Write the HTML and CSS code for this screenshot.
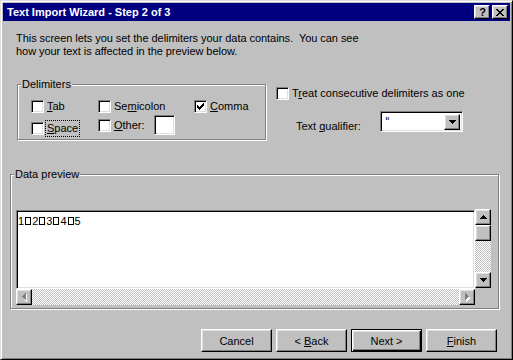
FILE: index.html
```html
<!DOCTYPE html>
<html lang="en">

<head>
    <meta charset="UTF-8">
    <meta name="viewport" content="width=device-width, initial-scale=1.0">
    <title>Text Import Wizard - Step 2 of 3</title>
    <link rel="stylesheet" href="styles.css">
</head>

<body>
    <div class="window">
        <div class="titlebar">
            <span class="title">Text Import Wizard - Step 2 of 3</span>
            <div class="title-buttons">
                <span class="tbtn help">?</span>
                <span class="tbtn">
                    <svg width="8" height="7" viewBox="0 0 8 7" shape-rendering="crispEdges">
                        <path d="M0 0h2v1h-2zM6 0h2v1h-2zM1 1h2v1h-2zM5 1h2v1h-2zM2 2h4v1h-4zM3 3h2v1h-2zM2 4h4v1h-4zM1 5h2v1h-2zM5 5h2v1h-2zM0 6h2v1h-2zM6 6h2v1h-2z" fill="#000" />
                    </svg>
                </span>
            </div>
        </div>

        <div class="content">
            <p class="intro">This screen lets you set the delimiters your data contains.&nbsp; You can see<br>how your text is affected in the preview below.</p>

            <div class="options">
                <div class="group delimiters">
                    <span class="group-label">Delimiters</span>
                    <div class="delim-grid">
                        <label class="check"><span class="box"></span><span><u>T</u>ab</span></label>
                        <label class="check"><span class="box"></span><span>Se<u>m</u>icolon</span></label>
                        <label class="check">
                            <span class="box">
                                <svg width="7" height="7" viewBox="0 0 7 7" shape-rendering="crispEdges">
                                    <path d="M6 0h1v3h-1zM5 1h1v3h-1zM4 2h1v3h-1zM3 3h1v3h-1zM2 4h1v3h-1zM1 3h1v3h-1zM0 2h1v3h-1z" fill="#000" />
                                </svg>
                            </span>
                            <span><u>C</u>omma</span>
                        </label>
                        <label class="check"><span class="box"></span><span class="focus"><u>S</u>pace</span></label>
                        <label class="check other"><span class="box"></span><span><u>O</u>ther:</span><span class="textbox"></span></label>
                    </div>
                </div>

                <div class="side">
                    <label class="check"><span class="box"></span><span>T<u>r</u>eat consecutive delimiters as one</span></label>
                    <div class="qualifier">
                        <span class="qualifier-label">Text <u>q</u>ualifier:</span>
                        <div class="combo">
                            <span class="combo-value">"</span>
                            <span class="sbtn combo-btn">
                                <svg width="7" height="4" viewBox="0 0 7 4" shape-rendering="crispEdges"><path d="M0 0h7v1h-7zM1 1h5v1h-5zM2 2h3v1h-3zM3 3h1v1h-1z" fill="#000" /></svg>
                            </span>
                        </div>
                    </div>
                </div>
            </div>

            <div class="group preview">
                <span class="group-label">Data preview</span>
                <div class="preview-area">
                    <div class="preview-main">
                        <div class="preview-box">
                            <div class="preview-line">1<span class="tab"></span>2<span class="tab"></span>3<span class="tab"></span>4<span class="tab"></span>5</div>
                        </div>
                        <div class="hscroll">
                            <span class="sbtn">
                                <svg width="5" height="9" viewBox="0 0 5 9" shape-rendering="crispEdges"><path d="M4 1h1v8h-1zM3 2h1v6h-1zM2 3h1v4h-1z" fill="#fff" /><path d="M3 0h1v7h-1zM2 1h1v5h-1zM1 2h1v3h-1zM0 3h1v1h-1z" fill="#808080" /></svg>
                            </span>
                            <span class="track"></span>
                            <span class="sbtn">
                                <svg width="5" height="9" viewBox="0 0 5 9" shape-rendering="crispEdges"><path d="M1 1h1v8h-1zM2 2h1v6h-1zM3 3h1v4h-1zM4 4h1v2h-1z" fill="#fff" /><path d="M0 0h1v7h-1zM1 1h1v5h-1zM2 2h1v3h-1zM3 3h1v1h-1z" fill="#808080" /></svg>
                            </span>
                        </div>
                    </div>
                    <div class="vscroll">
                        <span class="sbtn">
                            <svg width="7" height="4" viewBox="0 0 7 4" shape-rendering="crispEdges"><path d="M3 0h1v1h-1zM2 1h3v1h-3zM1 2h5v1h-5zM0 3h7v1h-7z" fill="#000" /></svg>
                        </span>
                        <span class="sbtn thumb"></span>
                        <span class="track"></span>
                        <span class="sbtn">
                            <svg width="7" height="4" viewBox="0 0 7 4" shape-rendering="crispEdges"><path d="M0 0h7v1h-7zM1 1h5v1h-5zM2 2h3v1h-3zM3 3h1v1h-1z" fill="#000" /></svg>
                        </span>
                    </div>
                </div>
            </div>

            <div class="buttons">
                <button class="btn">Cancel</button>
                <button class="btn">&lt; <u>B</u>ack</button>
                <button class="btn default">Next &gt;</button>
                <button class="btn"><u>F</u>inish</button>
            </div>
        </div>
    </div>
</body>

</html>
```

FILE: styles.css
```css
* {
    box-sizing: border-box;
}

body {
    margin: 0;
    font: 11px "Liberation Sans", Arial, sans-serif;
    color: #000;
    background: #c0c0c0;
}

u {
    text-decoration: underline;
    text-underline-offset: 1px;
}

.window {
    width: 513px;
    height: 360px;
    background: #c0c0c0;
    border: 1px solid;
    border-color: #dfdfdf #000 #000 #dfdfdf;
    box-shadow: inset 1px 1px #fff, inset -1px -1px #808080;
    padding: 2px;
    display: flex;
    flex-direction: column;
}

/* title bar */

.titlebar {
    height: 18px;
    flex: none;
    background: #000080;
    color: #fff;
    font-weight: bold;
    display: flex;
    align-items: center;
    justify-content: space-between;
    padding: 0 2px 0 4px;
}

.title-buttons {
    display: flex;
    gap: 2px;
}

.tbtn,
.sbtn,
.btn {
    background: #c0c0c0;
    border: 1px solid;
    border-color: #fff #000 #000 #fff;
    box-shadow: inset -1px -1px #808080, inset 1px 1px #dfdfdf;
}

.tbtn {
    width: 16px;
    height: 14px;
    display: flex;
    align-items: center;
    justify-content: center;
    color: #000;
}

.tbtn.help {
    font-size: 11px;
    padding-left: 1px;
}

/* content */

.content {
    flex: 1;
    padding: 11px 11px 0 7px;
}

.intro {
    margin: 0 0 0 6px;
    line-height: 13px;
    letter-spacing: -0.05px;
}

.options {
    display: flex;
    margin-top: 26px;
    padding-left: 7px;
}

.group {
    border: 1px solid #808080;
    box-shadow: inset 1px 1px #fff, 1px 1px #fff;
}

.group-label {
    display: block;
    width: fit-content;
    margin: -7px 0 0 3px;
    padding: 0 1px;
    line-height: 13px;
    background: #c0c0c0;
}

.delimiters {
    width: 249px;
    height: 56px;
}

.delim-grid {
    display: grid;
    grid-template-columns: 67px 96px auto;
    align-items: end;
    row-gap: 2px;
    margin-top: 9px;
    padding-left: 13px;
}

.check {
    display: flex;
    align-items: center;
    gap: 3px;
    line-height: 13px;
    white-space: nowrap;
}

.box {
    width: 13px;
    height: 13px;
    flex: none;
    background: #fff;
    border: 1px solid;
    border-color: #808080 #fff #fff #808080;
    box-shadow: inset 1px 1px #000, inset -1px -1px #dfdfdf;
    display: flex;
    align-items: center;
    justify-content: center;
}

.focus {
    outline: 1px dotted #000;
    outline-offset: 1px;
}

.textbox {
    width: 21px;
    height: 20px;
    margin-left: 6px;
    background: #fff;
    border: 1px solid;
    border-color: #808080 #fff #fff #808080;
    box-shadow: inset 1px 1px #000, inset -1px -1px #dfdfdf;
}

.side {
    margin-left: 10px;
    padding-top: 3px;
}

.qualifier {
    display: flex;
    align-items: center;
    margin: 11px 0 0 20px;
}

.qualifier-label {
    width: 84px;
    padding-top: 8px;
}

.combo {
    width: 83px;
    height: 21px;
    display: flex;
    justify-content: space-between;
    background: #fff;
    border: 1px solid;
    border-color: #808080 #fff #fff #808080;
    box-shadow: inset 1px 1px #000, inset -1px -1px #dfdfdf;
    padding: 2px;
}

.combo-value {
    padding: 1px 0 0 2px;
    line-height: 13px;
    color: #000;
    font-family: "DejaVu Sans", sans-serif;
    font-size: 10px;
}

.combo-btn {
    width: 16px;
    height: 17px;
}

/* preview */

.preview {
    margin-top: 34px;
    height: 135px;
}

.preview-area {
    display: flex;
    margin-top: 28px;
    padding-left: 5px;
}

.preview-main {
    width: 459px;
    padding-top: 1px;
}

.preview-box {
    height: 79px;
    background: #fff;
    border: 1px solid;
    border-color: #808080 #fff #fff #808080;
    box-shadow: inset 1px 1px #000, inset -1px -1px #dfdfdf;
    padding: 5px 0 0 1px;
}

.preview-line {
    line-height: 11px;
}

.tab {
    display: inline-block;
    width: 6px;
    height: 8px;
    border: 1px solid #000;
    margin: 0 1px;
}

.sbtn {
    width: 16px;
    height: 16px;
    flex: none;
    display: flex;
    align-items: center;
    justify-content: center;
}

.track {
    flex: 1;
    background: repeating-conic-gradient(#fff 0 25%, #c0c0c0 0 50%) 0 0 / 2px 2px;
}

.hscroll {
    display: flex;
    height: 16px;
}

.vscroll {
    display: flex;
    flex-direction: column;
    width: 16px;
    height: 79px;
}

/* buttons */

.buttons {
    display: flex;
    justify-content: flex-end;
    gap: 4px;
    margin-top: 20px;
    padding-right: 2px;
}

.btn {
    width: 71px;
    height: 23px;
    font: inherit;
    color: #000;
    padding: 0;
}

.btn.default {
    border-color: #000;
    box-shadow: inset 1px 1px #fff, inset -1px -1px #000, inset -2px -2px #808080, inset 2px 2px #dfdfdf;
}
```
